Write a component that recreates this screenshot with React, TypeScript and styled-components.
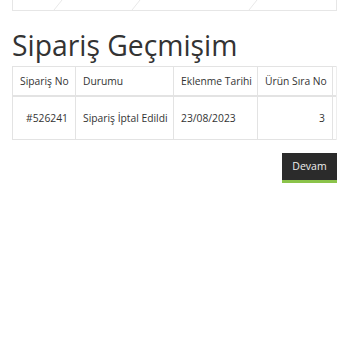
import React from "react";
import styled, { createGlobalStyle } from "styled-components";

const Global = createGlobalStyle`
  html, body { margin: 0; padding: 0; background: #fff; }
  body { font-family: "Open Sans", "Noto Sans", sans-serif; color: #333; }
`;

const Page = styled.div`
  padding: 0 13px 0 12px;
`;

const StepperEdge = styled.div`
  position: relative;
  height: 10px;
  border: 1px solid #e6e6e6;
  border-top: none;
  overflow: hidden;
`;

const Diagonals = styled.svg`
  position: absolute;
  inset: 0;
`;

const Title = styled.h1`
  margin: 15px 0 0;
  font-size: 28.3px;
  font-weight: 400;
  line-height: 38px;
  color: #333;
`;

const TableWrap = styled.div`
  margin-top: 2px;
  overflow: hidden;
  border-right: 1px solid #eee;
`;

const Table = styled.table`
  border-collapse: collapse;
  table-layout: fixed;
  width: 400px;
  font-size: 10.3px;
  color: #333;
`;

const Th = styled.th<{ $w: number }>`
  box-sizing: border-box;
  width: ${(p) => p.$w}px;
  height: 29px;
  padding: 0 7px;
  text-align: left;
  font-weight: 400;
  border: 1px solid #e3e3e3;
  border-bottom: 2px solid #e3e3e3;
  white-space: nowrap;
`;

const Td = styled.td<{ $align?: string }>`
  height: 42px;
  padding: 0 7px;
  text-align: ${(p) => p.$align || "left"};
  border: 1px solid #e3e3e3;
  white-space: nowrap;
`;

const Actions = styled.div`
  display: flex;
  justify-content: flex-end;
  margin-top: 13px;
`;

const Button = styled.button`
  font-family: "Open Sans", sans-serif;
  font-size: 10.5px;
  color: #eee;
  background: #2b2b2b;
  border: none;
  border-bottom: 3px solid #8bc34a;
  height: 30px;
  width: 55px;
  padding: 0;
  cursor: pointer;
`;

export default function App() {
  return (
    <>
      <Global />
      <Page>
        <StepperEdge>
          <Diagonals width="325" height="10" viewBox="0 0 325 10">
            <g stroke="#e8e8e8" strokeWidth="1" fill="none">
              <line x1="41" y1="10" x2="49" y2="0" />
              <line x1="119" y1="10" x2="127" y2="0" />
              <line x1="236" y1="10" x2="244" y2="0" />
            </g>
          </Diagonals>
        </StepperEdge>
        <Title>Sipariş Geçmişim</Title>
        <TableWrap>
          <Table>
            <thead>
              <tr>
                <Th $w={63}>Sipariş No</Th>
                <Th $w={98}>Durumu</Th>
                <Th $w={84}>Eklenme Tarihi</Th>
                <Th $w={75}>Ürün Sıra No</Th>
                <Th $w={80}></Th>
              </tr>
            </thead>
            <tbody>
              <tr>
                <Td $align="right">#526241</Td>
                <Td>Sipariş İptal Edildi</Td>
                <Td>23/08/2023</Td>
                <Td $align="right">3</Td>
                <Td></Td>
              </tr>
            </tbody>
          </Table>
        </TableWrap>
        <Actions>
          <Button>Devam</Button>
        </Actions>
      </Page>
    </>
  );
}
